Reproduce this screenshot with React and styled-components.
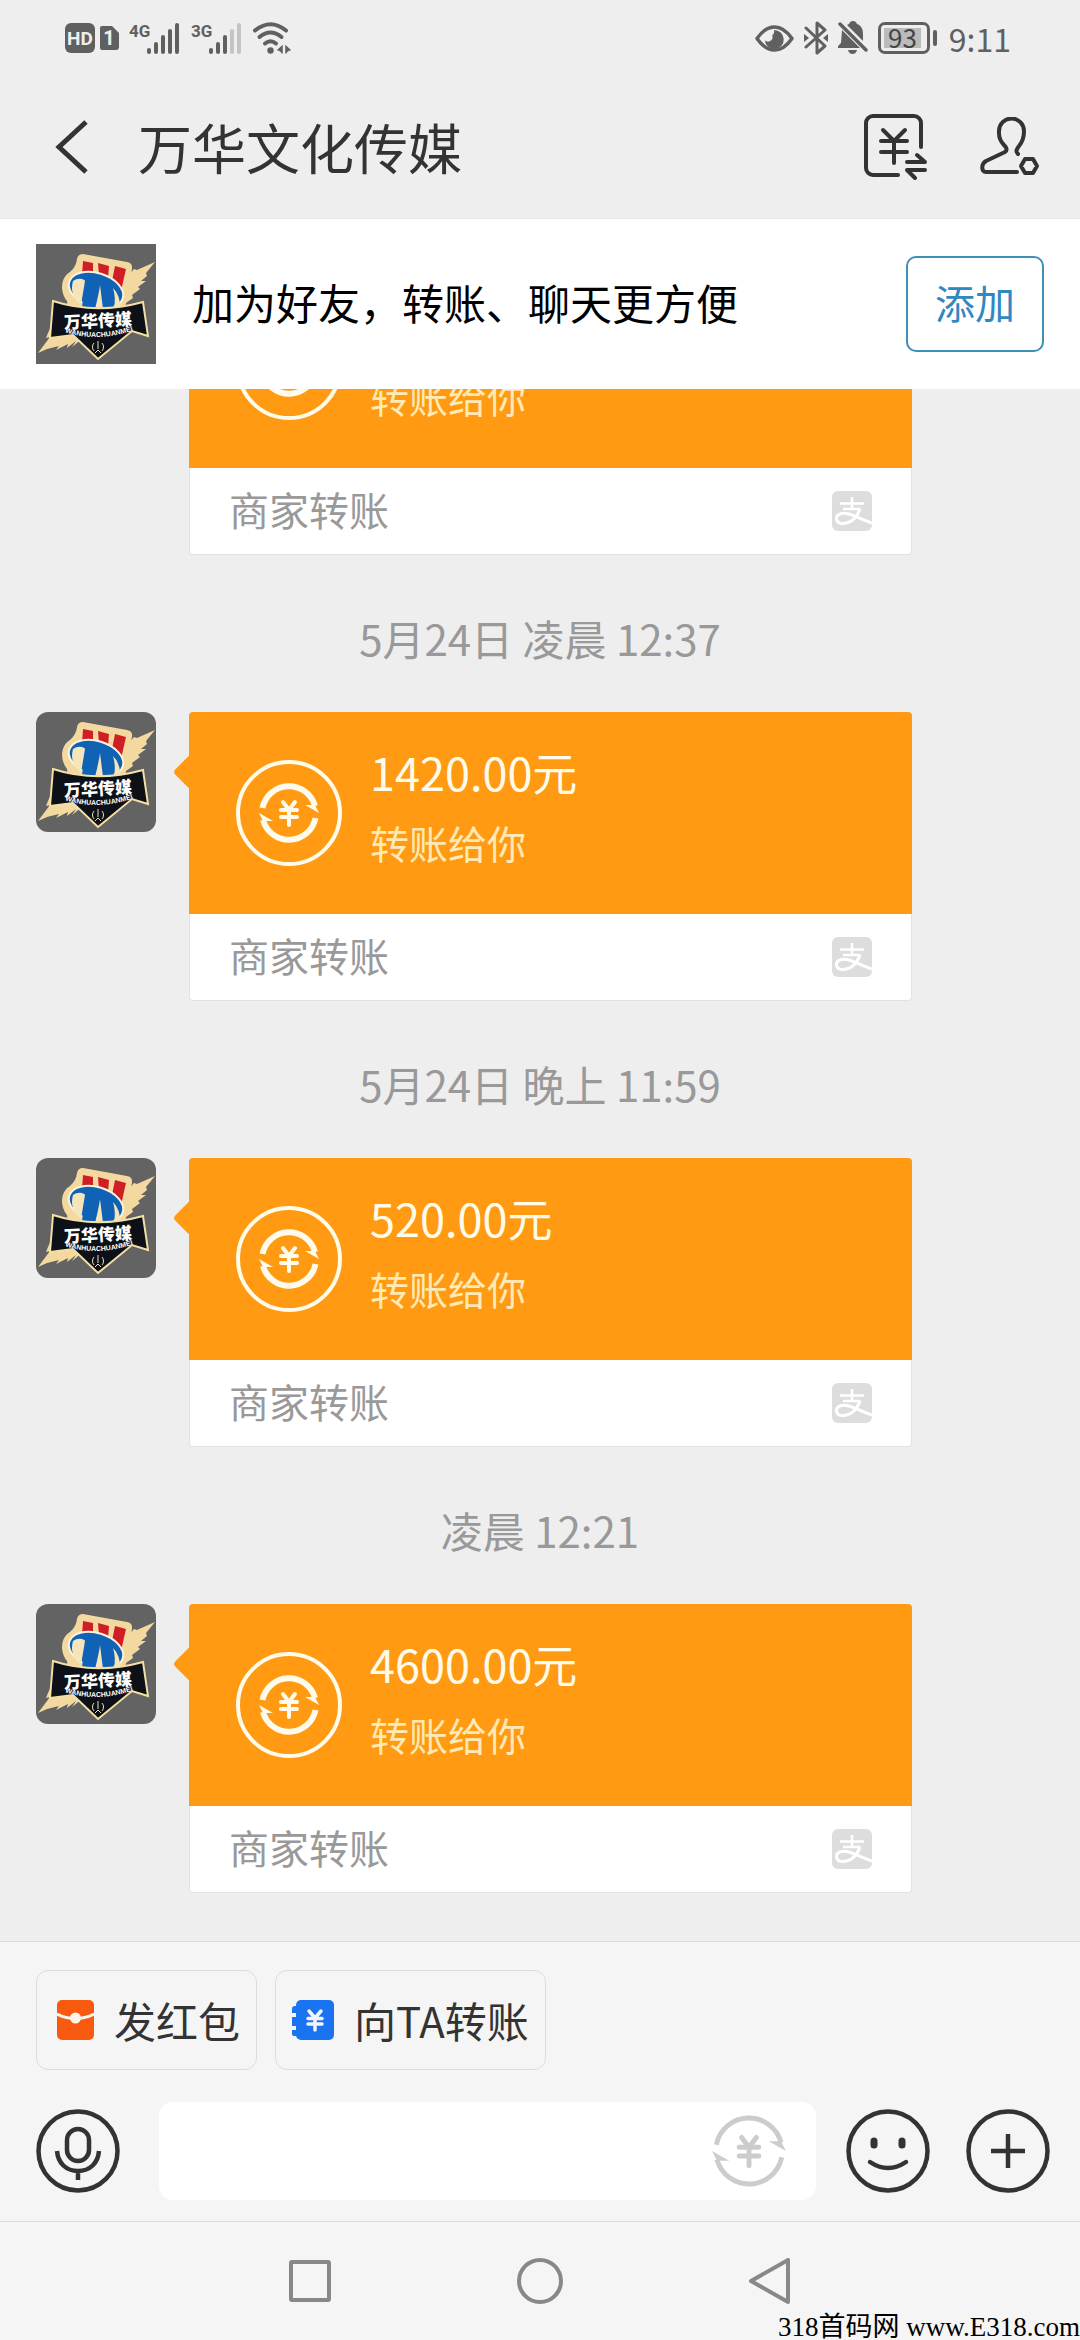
import React from 'react';

import styled, { createGlobalStyle } from 'styled-components';


const GlobalStyle = createGlobalStyle`
* { box-sizing: border-box; }

body {
  margin: 0;
  background-color: #eeeeee;
  font-family: "Noto Sans CJK SC", "Noto Sans", sans-serif;
  color: #333333;
}

button {
  margin: 0;
  padding: 0;
  border: none;
  background: none;
  font: inherit;
  color: inherit;
  cursor: pointer;
}

svg { display: block; }

h1, p { margin: 0; font-weight: 400; }
`;

const Page = styled.div`
position: relative;
display: flex;
flex-direction: column;
height: 100vh;
overflow: hidden;
`;

const StatusBar = styled.div`
display: flex;
align-items: center;
justify-content: space-between;
height: 76px;
padding: 0 69px 0 65px;
color: #606060;
flex-shrink: 0;
`;

const StatusGroup = styled.div`
display: flex;
align-items: center;
gap: 10px;
`;

const Battery = styled.div`
display: flex;
align-items: center;
gap: 3px;

&::after {
  content: '';
  width: 4px;
  height: 16px;
  border-radius: 2px;
  background-color: #606060;
}
`;

const BatteryBody = styled.div`
width: 52px;
height: 32px;
padding: 3px;
border: 3px solid #606060;
border-radius: 7px;
`;

const BatteryLevel = styled.div`
width: 93%;
height: 20px;
background-color: #bbbbbb;
font-size: 26px;
line-height: 18px;
text-align: center;
color: #444444;
`;

const Clock = styled.span`
margin-left: 2px;
font-size: 32px;
line-height: 40px;
`;

const Header = styled.header`
display: flex;
align-items: center;
height: 142px;
padding: 0 40px 0 54px;
flex-shrink: 0;
`;

const Title = styled.h1`
flex: 1;
margin-left: 48px;
font-size: 54px;
line-height: 72px;
`;

const HeaderActions = styled.div`
display: flex;
gap: 52px;
`;

const Banner = styled.section`
display: flex;
align-items: center;
height: 171px;
padding: 0 36px;
border-top: 1px solid #e8e8e8;
background-color: #ffffff;
flex-shrink: 0;
`;

const BannerText = styled.p`
flex: 1;
margin-left: 36px;
padding-bottom: 4px;
font-size: 42px;
line-height: 60px;
color: #000000;
`;

const AddButton = styled.button`
width: 138px;
height: 96px;
padding-bottom: 4px;
border: 2px solid #3f8fb8;
border-radius: 10px;
font-size: 40px;
color: #2f88c0;
`;

const AvatarBox = styled.div`
width: 120px;
height: 120px;
border-radius: ${props => (props.$rounded ? '12px' : '0')};
overflow: hidden;
flex-shrink: 0;
`;

const Chat = styled.main`
flex: 1;
min-height: 0;
display: flex;
flex-direction: column;
justify-content: flex-end;
overflow: hidden;
padding-bottom: 48px;
`;

const Time = styled.p`
padding: 53px 0 44px;
font-size: 42px;
line-height: 60px;
text-align: center;
color: #999999;
flex-shrink: 0;
`;

const Message = styled.div`
display: flex;
align-items: flex-start;
gap: 33px;
padding: 0 168px 0 36px;
flex-shrink: 0;
`;

const Card = styled.div`
position: relative;
flex: 1;
`;

const Pointer = styled.span`
position: absolute;
top: 47px;
left: -11px;
width: 26px;
height: 26px;
border-radius: 4px;
background-color: #ff9a12;
transform: rotate(45deg);
`;

const CardTop = styled.div`
position: relative;
display: flex;
align-items: center;
gap: 28px;
height: 202px;
padding: 0 47px;
border-radius: 4px 4px 0 0;
background-color: #ff9a12;
`;

const Ring = styled.div`
display: flex;
align-items: center;
justify-content: center;
width: 106px;
height: 106px;
border: 4px solid #fffbea;
border-radius: 50%;
color: #fffbea;
`;

const CardText = styled.div`
padding-bottom: 14px;
`;

const Amount = styled.p`
min-height: 72px;
font-size: 45px;
line-height: 72px;
color: #fffbea;
`;

const Note = styled.p`
font-size: 39px;
line-height: 68px;
color: #ffe9b5;
`;

const CardFoot = styled.div`
display: flex;
align-items: center;
justify-content: space-between;
height: 87px;
padding: 0 39px;
border: 1px solid #e2e2e2;
border-top: none;
border-radius: 0 0 4px 4px;
background-color: #ffffff;
font-size: 40px;
line-height: 60px;
color: #999999;
`;

const FootLabel = styled.span`
padding-bottom: 4px;
`;

const Footer = styled.footer`
padding: 28px 30px 21px 36px;
border-top: 1px solid #dcdcdc;
background-color: #f5f5f5;
flex-shrink: 0;
`;

const Chips = styled.div`
display: flex;
gap: 18px;
margin-bottom: 32px;
`;

const Chip = styled.button`
display: flex;
align-items: center;
gap: 20px;
height: 100px;
padding: 0 16px 0 ${props => props.$left}px;
border: 1px solid #dcdcdc;
border-radius: 12px;
font-size: 42px;
line-height: 60px;
`;

const Composer = styled.div`
display: flex;
align-items: center;
`;

const InputBox = styled.div`
flex: 1;
display: flex;
align-items: center;
height: 98px;
margin: 0 30px 0 39px;
padding-right: 30px;
border-radius: 14px;
background-color: #ffffff;
color: #cccccc;
`;

const TextInput = styled.input`
flex: 1;
min-width: 0;
height: 98px;
padding: 0 24px;
border: none;
outline: none;
background: none;
font: inherit;
font-size: 42px;
`;

const RightTools = styled.div`
display: flex;
gap: 36px;
`;

const NavBar = styled.nav`
display: flex;
align-items: center;
justify-content: center;
gap: 184px;
height: 119px;
border-top: 1px solid #dcdcdc;
background-color: #f5f5f5;
color: #888888;
flex-shrink: 0;
`;

const SiteMark = styled.span`
position: absolute;
right: 0;
bottom: 0;
font-family: "Liberation Serif", "Noto Sans CJK SC", serif;
font-size: 27px;
line-height: 26px;
color: #000000;
`;


const HdIcon = () => (
  <svg width="54" height="32" viewBox="0 0 54 32">
    <rect x="0" y="1" width="30" height="30" rx="6" fill="#606060" />
    <text x="15" y="23" fontSize="19" fontWeight="700" fontFamily="Roboto" textAnchor="middle" fill="#eeeeee">HD</text>
    <path d="M37 4h10l7 7v14a3 3 0 0 1-3 3H37a2 2 0 0 1-2-2V6a2 2 0 0 1 2-2z" fill="#606060" />
    <text x="44" y="23" fontSize="20" fontWeight="700" fontFamily="Roboto" textAnchor="middle" fill="#eeeeee">1</text>
  </svg>
)

const Signal = ({ label, level }) => (
  <svg width="52" height="32" viewBox="0 0 52 32">
    <text x="0" y="15" fontSize="17" fontWeight="700" fontFamily="Roboto" fill="#606060">{label}</text>
    {[6, 12, 19, 25, 31].map((h, i) => (
      <rect key={h} x={18 + i * 7} y={32 - h} width="4" height={h} rx="2" fill={i < level ? '#606060' : '#c4c4c4'} />
    ))}
  </svg>
)

const WifiIcon = () => (
  <svg width="38" height="32" viewBox="0 0 38 32" fill="none" stroke="#606060" strokeWidth="4" strokeLinecap="round">
    <path d="M2 8.500Q17.500-4 33 8.500" />
    <path d="M6.500 15Q17.500 6 28.500 15" />
    <path d="M12 21.500Q17.500 17 23 21.500" />
    <circle cx="17.500" cy="28.500" r="3.200" fill="#606060" stroke="none" />
    <path d="M25 28l4-3.500V31M37 28l-4-3.500V31" strokeWidth="1.500" fill="#606060" />
  </svg>
)

const EyeIcon = () => (
  <svg width="39" height="32" viewBox="0 0 39 32">
    <path d="M2 16.500Q10 5 19.500 5T37 16.500Q29 28 19.500 28T2 16.500z" fill="none" stroke="#606060" strokeWidth="3.500" strokeLinejoin="round" />
    <path d="M19 8a9.500 9.500 0 1 1-9.200 10.500c2 1.500 4.500 1.500 6.200 0 2-1.500 1.700-3.500 1.200-5 1.800-1.300 2.300-3.500 1.800-5.500z" fill="#606060" />
  </svg>
)

const BluetoothIcon = () => (
  <svg width="24" height="34" viewBox="0 0 24 34">
    <path d="M2 7l19 18-8 7V2l8 7L2 26" fill="none" stroke="#606060" strokeWidth="3" strokeLinejoin="round" strokeLinecap="round" />
    <path d="M0 13l5 4-5 4zM24 13l-5 4 5 4z" fill="#606060" />
  </svg>
)

const MuteIcon = () => (
  <svg width="30" height="34" viewBox="0 0 30 34" fill="#606060">
    <path d="M4 9L22 27H0v-2l3-3z" />
    <path d="M9 4l2-1q1-3 4-3t4 3c5 2 6 6 6 10v7z" />
    <path d="M10 29h9q-1 4-4.500 4T10 29z" />
    <path d="M2 3l26 26" stroke="#606060" strokeWidth="3.500" strokeLinecap="round" />
  </svg>
)

const BackIcon = () => (
  <svg width="36" height="54" viewBox="0 0 36 54" fill="none" stroke="#333333" strokeWidth="5">
    <path d="M32 2L5 27l27 25" />
  </svg>
)

const TransferListIcon = () => (
  <svg width="64" height="66" viewBox="0 0 64 66" fill="none" stroke="#333333" strokeWidth="4" strokeLinecap="round" strokeLinejoin="round">
    <path d="M34 61H9a7 7 0 0 1-7-7V9a7 7 0 0 1 7-7h41a7 7 0 0 1 7 7v24" />
    <path d="M19 16l11 11 11-11M30 27v22M17 27h26M17 38h26" />
    <path d="M43 48h18l-8-7M61 56H43l8 8" />
  </svg>
)

const ContactIcon = () => (
  <svg width="60" height="60" viewBox="0 0 60 60" fill="none" stroke="#333333" strokeWidth="4" strokeLinecap="round" strokeLinejoin="round">
    <path d="M37 55H6c-5 0-5-8 0-11l19-9c3-2 1-5-1-7-6-6-5-12-5-14a12 12 0 0 1 25 0c0 4 0 9-5 15-2 3-4 5-1 8" />
    <path d="M45 42h8l4 7-4 7h-8l-4-7z" />
  </svg>
)

// two arrows chasing round a yuan sign
const TransferMark = ({ size, weight }) => (
  <svg width={size} height={size} viewBox="-30 -30 60 60" fill="none" stroke="currentColor">
    <g strokeWidth={weight}>
      <path d="M-26.500-5A27 27 0 0 1 26-7" />
      <path d="M26.500 5A27 27 0 0 1-26 7" />
    </g>
    <path d="M16-8h10l4 8zM-16 8h-10l-4-8z" fill="currentColor" stroke="none" />
    <path d="M-6-11l6 8 6-8M0-3v15M-8-3H8M-8 4H8" strokeWidth="4" strokeLinecap="round" />
  </svg>
)

const AlipayIcon = () => (
  <svg width="40" height="40" viewBox="0 0 40 40">
    <rect width="40" height="40" rx="6" fill="#dddddd" />
    <g fill="none" stroke="#ffffff" strokeWidth="2.500">
      <path d="M8 12.500h24M20 6v12M11 18h17" />
      <path d="M28 17.500C25 28 17 33 10 32.500 3 32 2.500 24 9.500 22.500c8-1.500 15 4.500 30.500 9.500" strokeWidth="3" />
    </g>
  </svg>
)

const RedPacketIcon = () => (
  <svg width="37" height="40" viewBox="0 0 37 40">
    <rect width="37" height="40" rx="5" fill="#f85a10" />
    <path d="M0 14q18.500 9 37 0" fill="none" stroke="#f5f5f5" strokeWidth="3" />
    <circle cx="18.500" cy="18" r="5.500" fill="#fff4ea" />
  </svg>
)

const YuanBookIcon = () => (
  <svg width="42" height="40" viewBox="0 0 42 40">
    <rect x="4" width="38" height="40" rx="5" fill="#1a73f0" />
    <path d="M8 6H3a3 3 0 0 0-3 3v4h4v4H0v9h4v4H0v4a2 2 0 0 0 2 2h6z" fill="#1a73f0" />
    <path d="M17 11l6 7 6-7M23 18v12M16 18.500h14M16 24h14" fill="none" stroke="#f5f5f5" strokeWidth="3.500" strokeLinecap="round" />
  </svg>
)

const MicIcon = () => (
  <svg width="84" height="84" viewBox="0 0 84 84" fill="none" stroke="#333333" strokeWidth="4.500">
    <circle cx="42" cy="42" r="39.500" />
    <rect x="31" y="20" width="22" height="32" rx="11" />
    <path d="M21 42c1 12 9 20 21 20s20-8 21-20M42 62v9" />
  </svg>
)

const SmileIcon = () => (
  <svg width="84" height="84" viewBox="0 0 84 84" fill="none" stroke="#333333" strokeWidth="4.500">
    <circle cx="42" cy="42" r="39.500" />
    <path d="M28 32v4M56 32v4" strokeWidth="7" strokeLinecap="round" />
    <path d="M24 53q18 12 36 0" strokeLinecap="round" />
  </svg>
)

const PlusIcon = () => (
  <svg width="84" height="84" viewBox="0 0 84 84" fill="none" stroke="#333333" strokeWidth="4.500">
    <circle cx="42" cy="42" r="39.500" />
    <path d="M42 25v34M25 42h34" />
  </svg>
)

const NavIcon = ({ children }) => (
  <svg width="46" height="46" viewBox="0 0 46 46" fill="none" stroke="currentColor" strokeWidth="4" strokeLinejoin="round">
    {children}
  </svg>
)

const Avatar = ({ rounded }) => {
  const curve = React.useId()

  return (
    <AvatarBox $rounded={rounded}>
      <svg width="120" height="120" viewBox="0 0 120 120" role="img" aria-label="万华传媒">
        <rect width="120" height="120" fill="#636363" />
        <g fill="#f3d9a0">
          <path d="M41 15q1-5 6-5l44 8q6 1 5 7l-3 16-4 24H32l-1-8C24 48 24 34 34 28q6-5 7-13z" />
          <path d="M92 32l6-7 3 1 18-8-9 11 1 3-6 5 5 0-8 6 2 2-8 6 1 3-14 10z" />
          <path d="M16 80l-4 9-2 5 4-1-12 16 9-4 12-3-3 4 12-6-1 4 9-7-4 6 10-8-6-8z" />
        </g>
        <path d="M47 17l10 2v12H46zM62 19l11 3-1 13-9-3zM79 22l11 3-5 22-9-10z" fill="#cf1f24" />
        <ellipse cx="60" cy="46" rx="28" ry="17" transform="rotate(17 60 46)" fill="#0f62b4" stroke="#fbf3dc" strokeWidth="2" />
        <path d="M48 44l-2 20h32l-2-20z" fill="#0f62b4" />
        <path d="M37 37q4-3 9-2 3 1 3 2l-4 24q-12-10-8-24zM59 65q4-16 5-24l3 24zM78 64q2-10-1-20 8 8 7 21z" fill="#f6e5bb" />
        <path d="M17 57q43 14 90 1l5 34-16-5-34 28-25-24-23 3z" fill="#0d1117" stroke="#f3dfa5" strokeWidth="2" />
        <text x="28" y="83" fontSize="17" fontWeight="900" fill="#ffffff" transform="rotate(-3 62 80)">万华传媒</text>
        <path id={curve} d="M28 88Q62 99 98 86" fill="none" />
        <text fontSize="7" fontWeight="700" fontFamily="Liberation Sans" textAnchor="middle" fill="#ffffff">
          <textPath href={`#${curve}`} startOffset="50%">WANHUACHUANMEI</textPath>
        </text>
        <path d="M58 99a6 6 0 0 0 0 8M66 99a6 6 0 0 1 0 8M62 97v8M59 109l3-3 3 3" fill="none" stroke="#e8dcc0" strokeWidth="1" />
      </svg>
    </AvatarBox>
  )
}


const transfers = [
  { id: 1, time: '', amount: '' },
  { id: 2, time: '5月24日 凌晨 12:37', amount: '1420.00元' },
  { id: 3, time: '5月24日 晚上 11:59', amount: '520.00元' },
  { id: 4, time: '凌晨 12:21', amount: '4600.00元' },
];

const Transfer = ({ item }) => (
  <>
    {item.time && <Time>{item.time}</Time>}
    <Message>
      <Avatar rounded />
      <Card>
        <Pointer />
        <CardTop>
          <Ring><TransferMark size={60} weight={6} /></Ring>
          <CardText>
            <Amount>{item.amount}</Amount>
            <Note>转账给你</Note>
          </CardText>
        </CardTop>
        <CardFoot>
          <FootLabel>商家转账</FootLabel>
          <AlipayIcon />
        </CardFoot>
      </Card>
    </Message>
  </>
)


class App extends React.Component {

  state = {
    text: ''
  }

  handleText = (e) => {
    this.setState({ text: e.target.value })
  }

  render() {
    return (
      <Page>
        <GlobalStyle />
        <StatusBar>
          <StatusGroup>
            <HdIcon />
            <Signal label="4G" level={5} />
            <Signal label="3G" level={3} />
            <WifiIcon />
          </StatusGroup>
          <StatusGroup>
            <EyeIcon />
            <BluetoothIcon />
            <MuteIcon />
            <Battery>
              <BatteryBody><BatteryLevel>93</BatteryLevel></BatteryBody>
            </Battery>
            <Clock>9:11</Clock>
          </StatusGroup>
        </StatusBar>

        <Header>
          <button type="button" aria-label="返回"><BackIcon /></button>
          <Title>万华文化传媒</Title>
          <HeaderActions>
            <button type="button" aria-label="转账记录"><TransferListIcon /></button>
            <button type="button" aria-label="联系人设置"><ContactIcon /></button>
          </HeaderActions>
        </Header>

        <Banner>
          <Avatar />
          <BannerText>加为好友，转账、聊天更方便</BannerText>
          <AddButton type="button">添加</AddButton>
        </Banner>

        <Chat>
          {transfers.map(item => <Transfer key={item.id} item={item} />)}
        </Chat>

        <Footer>
          <Chips>
            <Chip type="button" $left={20}><RedPacketIcon />发红包</Chip>
            <Chip type="button" $left={16}><YuanBookIcon />向TA转账</Chip>
          </Chips>
          <Composer>
            <button type="button" aria-label="语音"><MicIcon /></button>
            <InputBox>
              <TextInput aria-label="消息" value={this.state.text} onChange={this.handleText} />
              <button type="button" aria-label="转账"><TransferMark size={74} weight={4} /></button>
            </InputBox>
            <RightTools>
              <button type="button" aria-label="表情"><SmileIcon /></button>
              <button type="button" aria-label="更多"><PlusIcon /></button>
            </RightTools>
          </Composer>
        </Footer>

        <NavBar>
          <button type="button" aria-label="最近任务"><NavIcon><rect x="4" y="4" width="38" height="38" rx="1" /></NavIcon></button>
          <button type="button" aria-label="主屏幕"><NavIcon><circle cx="23" cy="23" r="21" /></NavIcon></button>
          <button type="button" aria-label="后退"><NavIcon><path d="M41 2v42L4 23z" /></NavIcon></button>
        </NavBar>

        <SiteMark>318首码网 www.E318.com</SiteMark>
      </Page>
    )
  }
}

export default App;
